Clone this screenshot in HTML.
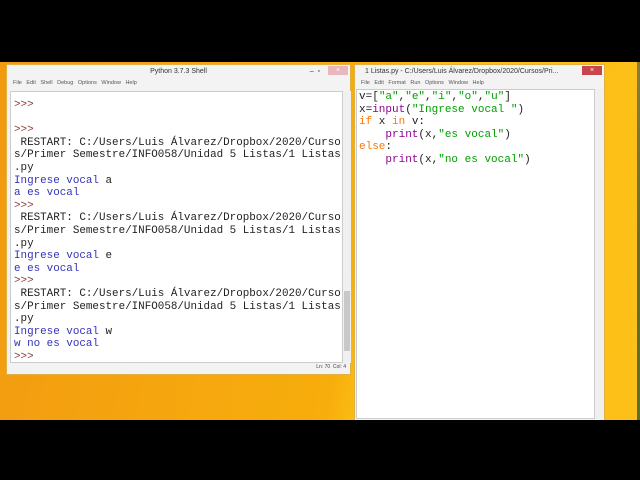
<!DOCTYPE html>
<html><head><meta charset="utf-8"><style>
*{margin:0;padding:0;box-sizing:border-box}
body{width:640px;height:480px;background:#000;position:relative;overflow:hidden;font-family:"Liberation Sans",sans-serif}
#desk{position:absolute;left:0;top:62px;width:640px;height:358px;background:linear-gradient(100deg,#f29a10 0%,#f6a90e 40%,#f7ad0c 55%,#fbbe14 60%,#fcc018 100%)}
.win{position:absolute;background:#f3f3f3;border:1px solid #e0b040}
.title{height:13px;font-size:7px;color:#333;text-align:center;line-height:13px;position:relative}
.menu{height:11px;font-size:5.5px;color:#555;line-height:11px;padding-left:6px;word-spacing:3px}
.text{position:absolute;background:#fff;border:1px solid #ccc;font-family:"Liberation Mono",monospace;white-space:pre}
.close{position:absolute;top:1px;width:20px;height:9px;background:#c8454e;color:#fff;font-size:7px;line-height:9px;text-align:center}
.p{color:#8b3a3a}.o{color:#3333bb}.k{color:#ff7700}.s{color:#00a000}.b{color:#900090}
</style></head><body>
<div id="desk"></div>
<div style="position:absolute;left:637px;top:62px;width:3px;height:358px;background:linear-gradient(#8a7a40,#6a6a30 50%,#5a7030)"></div>
<div class="win" style="left:6px;top:64px;width:345px;height:311px">
 <div class="title">Python 3.7.3 Shell<span style="position:absolute;right:30px;top:0">–&nbsp;&nbsp;▫</span><div class="close" style="right:2px;background:#e8b8be">×</div></div>
 <div class="menu">File Edit Shell Debug Options Window Help</div>
 <div class="text" style="left:3px;top:26px;width:333px;height:272px;font-size:10.9px;line-height:12.6px;padding:7px 0 0 3px;color:#222"><span class="p">&gt;&gt;&gt;</span>

<span class="p">&gt;&gt;&gt;</span>
 RESTART: C:/Users/Luis Álvarez/Dropbox/2020/Curso
s/Primer Semestre/INFO058/Unidad 5 Listas/1 Listas
.py
<span class="o">Ingrese vocal </span>a
<span class="o">a es vocal</span>
<span class="p">&gt;&gt;&gt;</span>
 RESTART: C:/Users/Luis Álvarez/Dropbox/2020/Curso
s/Primer Semestre/INFO058/Unidad 5 Listas/1 Listas
.py
<span class="o">Ingrese vocal </span>e
<span class="o">e es vocal</span>
<span class="p">&gt;&gt;&gt;</span>
 RESTART: C:/Users/Luis Álvarez/Dropbox/2020/Curso
s/Primer Semestre/INFO058/Unidad 5 Listas/1 Listas
.py
<span class="o">Ingrese vocal </span>w
<span class="o">w no es vocal</span>
<span class="p">&gt;&gt;&gt;</span></div>
 <div style="position:absolute;left:336px;top:26px;width:8px;height:272px;background:#f0f0f0"><div style="position:absolute;left:1px;top:200px;width:6px;height:60px;background:#c8c8c8"></div></div>
 <div style="position:absolute;right:4px;top:299px;font-size:5px;color:#444">Ln: 70&nbsp;&nbsp;Col: 4</div>
</div>
<div class="win" style="left:354px;top:64px;width:251px;height:360px">
 <div class="title" style="text-align:left;padding-left:10px">1 Listas.py - C:/Users/Luis Álvarez/Dropbox/2020/Cursos/Pri...<div class="close" style="right:2px">×</div></div>
 <div class="menu">File Edit Format Run Options Window Help</div>
 <div class="text" style="left:1px;top:24px;width:239px;height:330px;font-size:11px;line-height:12.6px;padding:1px 0 0 2px;color:#222">v=[<span class="s">"a"</span>,<span class="s">"e"</span>,<span class="s">"i"</span>,<span class="s">"o"</span>,<span class="s">"u"</span>]
x=<span class="b">input</span>(<span class="s">"Ingrese vocal "</span>)
<span class="k">if</span> x <span class="k">in</span> v:
    <span class="b">print</span>(x,<span class="s">"es vocal"</span>)
<span class="k">else</span>:
    <span class="b">print</span>(x,<span class="s">"no es vocal"</span>)</div>
 <div style="position:absolute;left:240px;top:24px;width:8px;height:330px;background:#f0f0f0"></div>
</div>
<div style="position:absolute;left:0;top:420px;width:640px;height:60px;background:#000"></div>
</body></html>
